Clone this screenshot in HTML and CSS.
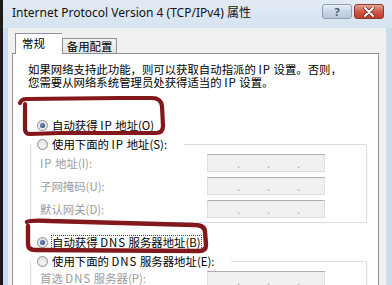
FILE: index.html
```html
<!DOCTYPE html>
<html lang="zh-CN">
<head>
<meta charset="utf-8">
<link rel="stylesheet" href="styles.css">
</head>
<body>
<div class="window">
  <div class="titlebar">
    <span class="title">Internet Protocol Version 4 (TCP/IPv4) 属性</span>
    <div class="tbtns">
      <span class="btn help">?</span>
      <span class="btn close"><svg width="14" height="10" viewBox="0 0 14 10"><path d="M3 1 L11 9 M11 1 L3 9" stroke="#5a1f1a" stroke-width="3.4" stroke-linecap="round"/><path d="M3 1 L11 9 M11 1 L3 9" stroke="#ffffff" stroke-width="2" stroke-linecap="round"/></svg></span>
    </div>
  </div>
  <div class="client">
    <div class="tabs">
      <span class="tab active">常规</span>
      <span class="tab">备用配置</span>
    </div>
    <div class="panel">
      <p class="desc">如果网络支持此功能，则可以获取自动指派的 <span class="lat">IP</span> 设置。否则，<br>您需要从网络系统管理员处获得适当的 <span class="lat">IP</span> 设置。</p>
      <div class="rrow first"><span class="radio on"></span><span>自动获得 <span class="lat">IP</span> 地址(O)</span></div>
      <fieldset class="group">
        <legend class="rrow"><span class="radio"></span><span>使用下面的 <span class="lat">IP</span> 地址(S):</span></legend>
        <div class="frows">
          <div class="frow"><span class="flabel"><span class="lat">IP</span> 地址(I):</span><span class="field"><i>.</i><i>.</i><i>.</i></span></div>
          <div class="frow"><span class="flabel">子网掩码(U):</span><span class="field"><i>.</i><i>.</i><i>.</i></span></div>
          <div class="frow"><span class="flabel">默认网关(D):</span><span class="field"><i>.</i><i>.</i><i>.</i></span></div>
        </div>
      </fieldset>
      <div class="rrow dns"><span class="radio on"></span><span class="focus">自动获得 <span class="lat">DNS</span> 服务器地址(B)</span></div>
      <fieldset class="group">
        <legend class="rrow"><span class="radio"></span><span>使用下面的 <span class="lat">DNS</span> 服务器地址(E):</span></legend>
        <div class="frows">
          <div class="frow second"><span class="flabel">首选 <span class="lat">DNS</span> 服务器(P):</span><span class="field"><i>.</i><i>.</i><i>.</i></span></div>
        </div>
      </fieldset>
    </div>
  </div>
</div>
<svg class="marks" width="392" height="285" viewBox="0 0 392 285">
  <path d="M20 103 Q21 99 27 99 L120 98 L152 98 Q161 98 162 106 L163 126 Q163 133 156 133 L60 133 L30 134 Q25 134 25 129 L25 104" fill="none" stroke="#82181c" stroke-width="4.2" stroke-linecap="round" stroke-linejoin="round"/>
  <path d="M27 222 Q30 220 50 221 L194 225 Q205 225 205 232 L206 245 Q206 251 199 251 L35 250 Q28 250 28 244 L28 226" fill="none" stroke="#82181c" stroke-width="4.4" stroke-linecap="round" stroke-linejoin="round"/>
</svg>
</body>
</html>
```
FILE: styles.css
```css
* { box-sizing: border-box; }
html, body { margin: 0; padding: 0; }
body {
  width: 392px;
  height: 285px;
  overflow: hidden;
  background: #1b1b1b;
  position: relative;
  font-family: "Noto Sans CJK SC", "Noto Sans", sans-serif;
  color: #000;
}
.window {
  margin-left: 3px;
  height: 285px;
  background: #cbdcef;
  display: flex;
  flex-direction: column;
}
.titlebar {
  height: 28px;
  flex: none;
  display: flex;
  align-items: center;
  justify-content: space-between;
  padding: 0 8px 0 9px;
  background: linear-gradient(#e2eaf4, #d7e3f1);
}
.title {
  font-family: "Noto Sans", "Noto Sans CJK SC", sans-serif;
  font-size: 12px;
  line-height: 14px;
  color: #111;
  margin-top: -2px;
}
.tbtns { display: flex; gap: 2px; margin-top: -5px; }
.btn {
  width: 30px;
  height: 15px;
  border-radius: 3px;
  display: flex;
  align-items: center;
  justify-content: center;
}
.help {
  background: linear-gradient(#e9eff7, #c8d5e6 50%, #b8c9df);
  border: 1px solid #8d9db4;
  color: #4e5968;
  font-family: "Noto Sans", sans-serif;
  font-size: 11px;
  font-weight: bold;
  line-height: 13px;
}
.close {
  background: linear-gradient(#e6a295, #d1594a 50%, #c43a2a);
  border: 1px solid #8c3a31;
}
.client {
  flex: 1;
  margin: 0 6px 0 5px;
  background: #f0f0f0;
  padding: 5px 7px 0 4px;
  display: flex;
  flex-direction: column;
}
.tabs {
  height: 20px;
  display: flex;
  align-items: flex-end;
  padding-left: 3px;
}
.tab {
  font-size: 11.4px;
  line-height: 13px;
  height: 15px;
  padding: 1px 4px 0 4px;
  border: 1px solid #8e929b;
  border-bottom: none;
  background: linear-gradient(#f5f5f5, #e4e4e4);
}
.tab.active {
  height: 21px;
  margin-bottom: -1px;
  padding: 3px 17px 0 6px;
  background: #fff;
  position: relative;
  z-index: 1;
  border-right: none;
}
.panel {
  flex: 1;
  background: #fff;
  border: 1px solid #8e929b;
  border-bottom: none;
  font-size: 11.4px;
}
.lat { letter-spacing: 1px; }
.desc {
  margin: 9px 0 0 15px;
  line-height: 13px;
  font-size: 11.4px;
}
.rrow {
  display: flex;
  align-items: center;
  height: 19px;
  line-height: 13px;
}
.rrow.first { margin-top: 27px; padding-left: 24px; }
.rrow.dns { margin-top: 10px; padding-left: 24px; }
.radio {
  width: 11px;
  height: 11px;
  border-radius: 50%;
  border: 1px solid #8f9191;
  background: radial-gradient(circle at 50% 60%, #f6f6f6, #dadada);
  margin-right: 4px;
  flex: none;
  display: flex;
  align-items: center;
  justify-content: center;
}
.radio.on::after {
  content: "";
  width: 5px;
  height: 5px;
  border-radius: 50%;
  background: radial-gradient(circle at 40% 40%, #6f8fc0, #1d3a68);
}
.group {
  margin: 0 11px 0 17px;
  padding: 0 0 4px 0;
  border: 1px solid #d5dfe5;
  min-width: 0;
}
.group legend {
  padding: 0 17px 0 6px;
  margin: 0;
}
.frows {
  display: flex;
  flex-direction: column;
  gap: 5px;
  padding-left: 9px;
}
.frow {
  display: flex;
  align-items: center;
  height: 18px;
  color: #9c9c9c;
}
.frow.second { margin-top: 0; align-items: flex-start; }
.frow.second .flabel { margin-top: 1px; }
.flabel { width: 167px; line-height: 13px; }
.field {
  width: 118px;
  height: 18px;
  flex: none;
  background: #f0f0f0;
  border: 1px solid #dedede;
  border-top-color: #adadad;
  display: flex;
  padding-left: 2px;
}
.field i {
  font-style: normal;
  width: 30px;
  text-align: right;
  color: #a8a8a8;
  font-size: 11px;
  line-height: 16px;
}
.focus {
  outline: 1px dotted #444;
  outline-offset: 0;
}
.marks {
  position: absolute;
  left: 0;
  top: 0;
  pointer-events: none;
}
```
